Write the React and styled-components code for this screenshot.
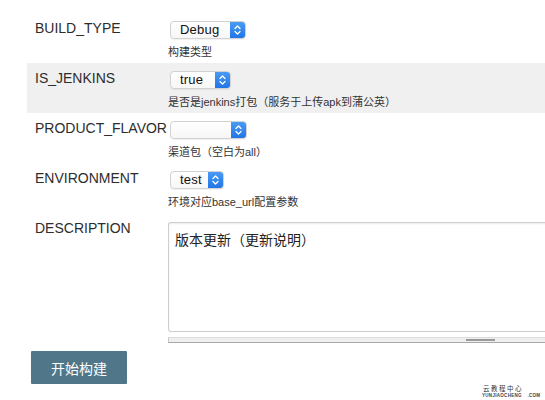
import React from "react";
import styled, { createGlobalStyle } from "styled-components";

const Global = createGlobalStyle`
  html, body { margin: 0; padding: 0; background: #fff; overflow: hidden; }
  body { font-family: "Liberation Sans", Arial, "Noto Sans CJK SC", sans-serif; color: #333; }
`;

const Page = styled.div`
  width: 545px;
  height: 400px;
  position: relative;
  overflow: hidden;
`;

const Form = styled.div`
  padding: 13px 0 0 27px;
  display: flex;
  flex-direction: column;
`;

const Row = styled.div`
  display: grid;
  grid-template-columns: 133px 1fr;
  padding: 8px 0 4px 8px;
  background: ${(p) => (p.$shaded ? "#f0f0f0" : "transparent")};
  min-height: 38px;
`;

const Label = styled.div`
  font-size: 14px;
  line-height: 14px;
  color: #2d2d2d;
  white-space: nowrap;
`;

const Value = styled.div`
  display: flex;
  flex-direction: column;
  align-items: flex-start;
  min-width: 0;
`;

const SelectBox = styled.div`
  margin-left: 2px;
  width: ${(p) => p.$w}px;
  height: 18px;
  box-sizing: border-box;
  border: 1px solid #d2d2d2;
  border-radius: 4px;
  background: linear-gradient(#ffffff, #f7f7f7);
  display: flex;
  align-items: stretch;
  overflow: hidden;
  box-shadow: 0 1px 1px rgba(0, 0, 0, 0.06);
`;

const SelectText = styled.span`
  flex: 1;
  font-size: 13px;
  line-height: 16px;
  padding-left: 9px;
  color: #111;
  font-weight: 500;
  letter-spacing: 0.2px;
`;

const Arrow = styled.span`
  width: 15px;
  background: linear-gradient(#4a9bf5, #2275e6);
  display: flex;
  align-items: center;
  justify-content: center;
`;

const Desc = styled.div`
  margin-top: 6px;
  font-size: 11px;
  line-height: 14px;
  color: #333;
  font-family: "Liberation Sans", Arial, "Noto Sans CJK SC", sans-serif;
  white-space: nowrap;
`;

const TextArea = styled.div`
  margin-top: 1px;
  width: 420px;
  height: 110px;
  box-sizing: border-box;
  border: 1px solid #cfcfcf;
  border-right: none;
  border-radius: 3px 0 0 3px;
  box-shadow: inset 0 1px 2px rgba(0, 0, 0, 0.08);
  padding: 7px 6px;
  font-size: 14px;
  line-height: 18px;
  color: #222;
  font-family: "Noto Sans CJK SC", sans-serif;
`;

const ScrollTrack = styled.div`
  margin-top: 5px;
  width: 420px;
  height: 6px;
  box-sizing: border-box;
  background: #efefef;
  border-top: 1px solid #dcdcdc;
  border-bottom: 1px solid #a8a8a8;
  border-left: 1px solid #c8c8c8;
  position: relative;
`;

const ScrollThumb = styled.div`
  position: absolute;
  left: 297px;
  top: 1px;
  width: 29px;
  height: 2px;
  background: #9a9a9a;
`;

const Footer = styled.div`
  padding: 4px 0 0 31px;
`;

const Button = styled.button`
  width: 96px;
  height: 33px;
  border: none;
  border-radius: 1px;
  background: #4f7689;
  color: #fff;
  font-size: 14px;
  font-family: "Noto Sans CJK SC", sans-serif;
  padding: 0;
  cursor: pointer;
`;

const Watermark = styled.div`
  position: absolute;
  left: 482px;
  top: 384px;
  display: flex;
  flex-direction: column;
  align-items: flex-start;
  color: #333;
`;

const WmTitle = styled.span`
  font-family: "Noto Sans CJK SC", sans-serif;
  font-size: 6.5px;
  line-height: 9px;
  letter-spacing: 1.5px;
  margin-left: 1px;
`;

const WmSub = styled.span`
  font-family: "Liberation Sans", sans-serif;
  font-size: 4.5px;
  line-height: 6px;
  font-weight: bold;
  letter-spacing: 0.3px;
  word-spacing: 4px;
  color: #444;
`;

const Chevrons = () => (
  <svg width="9" height="12" viewBox="0 0 9 12" fill="none">
    <path d="M2 4.5 L4.5 2 L7 4.5" stroke="#fff" strokeWidth="1.3" strokeLinecap="round" strokeLinejoin="round" />
    <path d="M2 7.5 L4.5 10 L7 7.5" stroke="#fff" strokeWidth="1.3" strokeLinecap="round" strokeLinejoin="round" />
  </svg>
);

const Select = ({ value, width }) => (
  <SelectBox $w={width}>
    <SelectText>{value}</SelectText>
    <Arrow>
      <Chevrons />
    </Arrow>
  </SelectBox>
);

const params = [
  { name: "BUILD_TYPE", value: "Debug", width: 76, desc: "构建类型" },
  { name: "IS_JENKINS", value: "true", width: 61, desc: "是否是jenkins打包（服务于上传apk到蒲公英）", shaded: true },
  { name: "PRODUCT_FLAVOR", value: "", width: 77, desc: "渠道包（空白为all）" },
  { name: "ENVIRONMENT", value: "test", width: 54, desc: "环境对应base_url配置参数" },
];

export default function App() {
  return (
    <Page>
      <Global />
      <Form>
        {params.map((p) => (
          <Row key={p.name} $shaded={p.shaded}>
            <Label>{p.name}</Label>
            <Value>
              <Select value={p.value} width={p.width} />
              <Desc>{p.desc}</Desc>
            </Value>
          </Row>
        ))}
        <Row>
          <Label>DESCRIPTION</Label>
          <Value>
            <TextArea>版本更新（更新说明）</TextArea>
            <ScrollTrack>
              <ScrollThumb />
            </ScrollTrack>
          </Value>
        </Row>
      </Form>
      <Footer>
        <Button>开始构建</Button>
      </Footer>
      <Watermark>
        <WmTitle>云教程中心</WmTitle>
        <WmSub>YUNJIAOCHENG .COM</WmSub>
      </Watermark>
    </Page>
  );
}
